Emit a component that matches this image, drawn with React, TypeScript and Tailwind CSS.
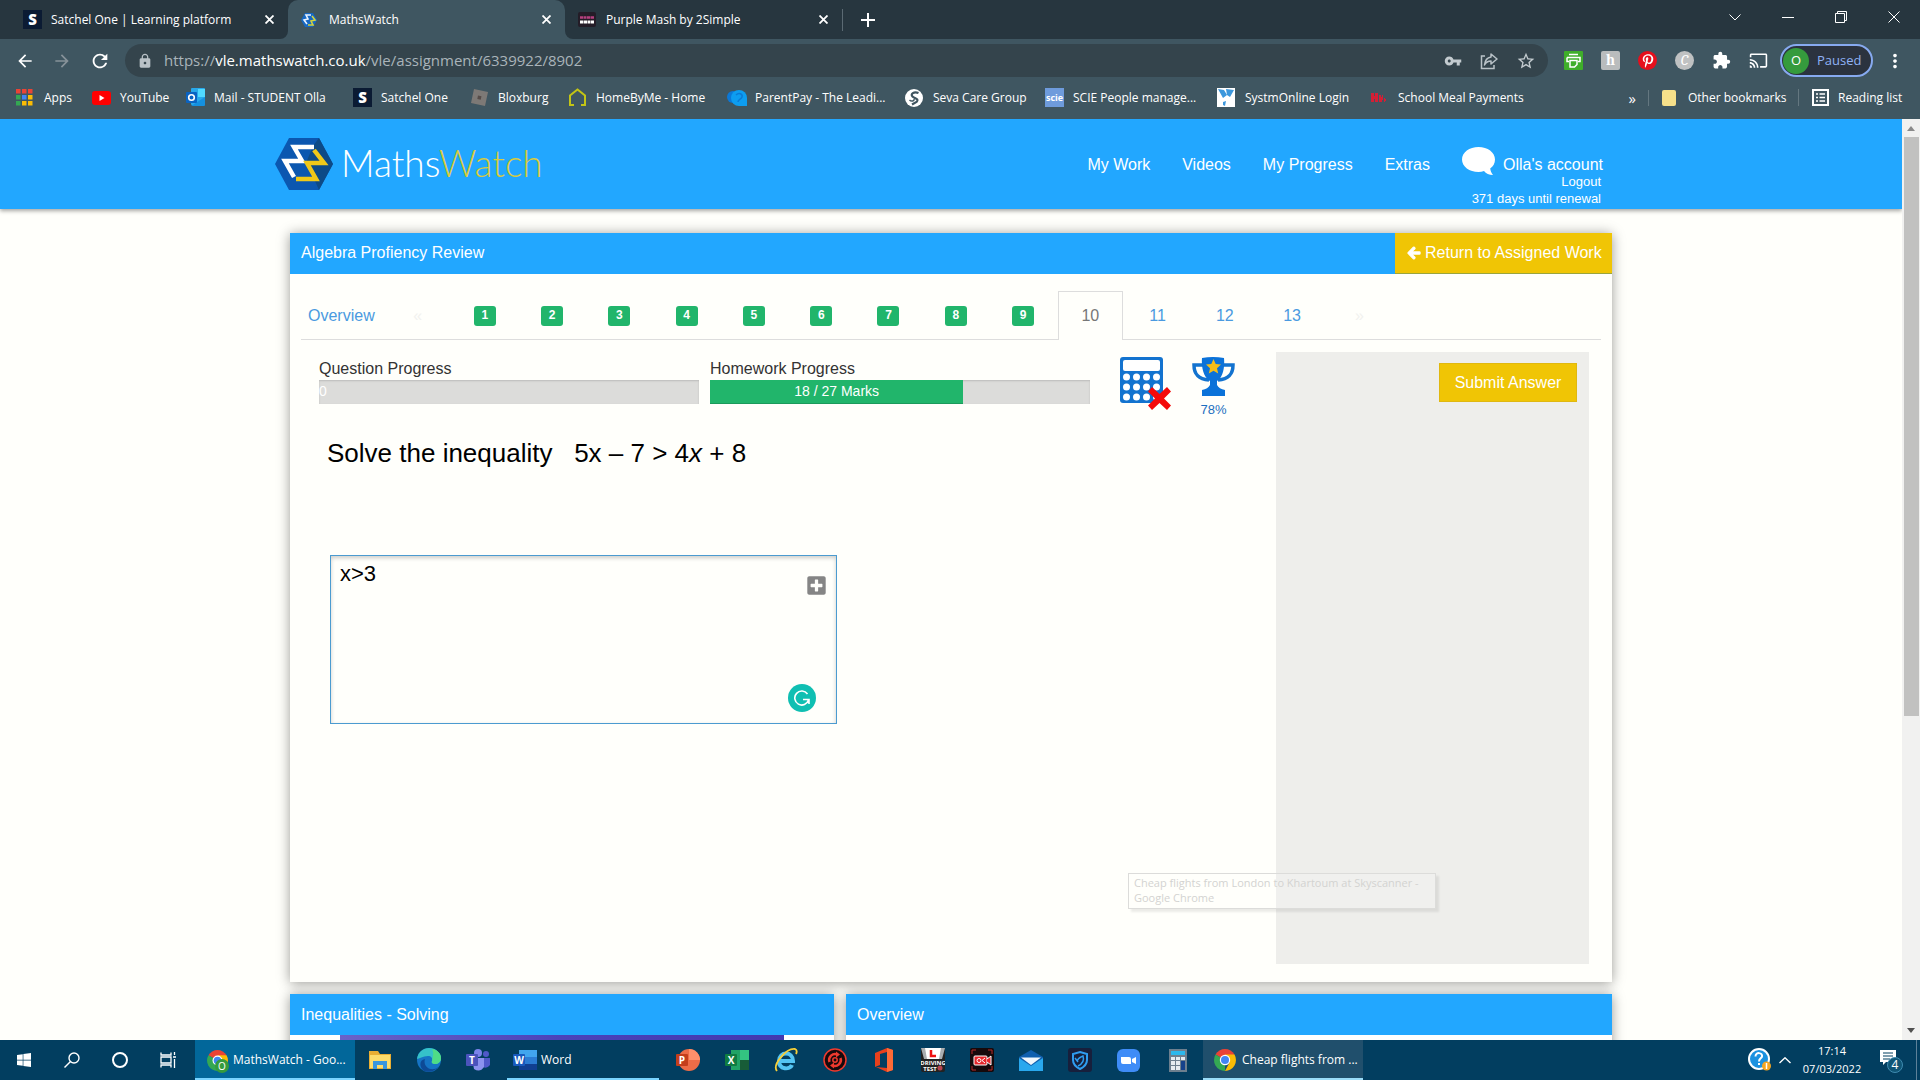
import { useState } from "react";
import type { ReactNode } from "react";
import { FaArrowLeft, FaPinterestP, FaPlusSquare, FaWindows } from "react-icons/fa";
import {
  MdArrowBack,
  MdArrowForward,
  MdCast,
  MdExtension,
  MdLock,
  MdMoreVert,
  MdRefresh,
  MdStarBorder,
  MdVpnKey,
} from "react-icons/md";

type TBrowserTab = {
  title: string;
  icon: ReactNode;
  className: string;
  active?: boolean;
};

type TBookmark = {
  label: string;
  icon: ReactNode;
};

/* ---------- small icons ---------- */

function SatchelIcon() {
  return (
    <span className="flex size-[19px] items-center justify-center bg-[#0b1b33] text-[15px] leading-none font-black text-white">
      S
    </span>
  );
}

function MathsWatchMark({ className }: { className: string }) {
  return (
    <svg viewBox="0 0 58 52" className={className}>
      <path d="M14 0h30l14 26-14 26H14L0 26z" fill="#0b57b0" />
      <path d="M38 8l6-8 14 26-14 26-4-9-9-18z" fill="#0d4a86" />
      <path d="M39 9H19l8 14H10l9 16" fill="none" stroke="#fff" strokeWidth="4.500" />
      <path d="M39 12l10 13H32l9 16H21" fill="none" stroke="#f0c818" strokeWidth="4.500" />
    </svg>
  );
}

function MathsWatchFavicon() {
  return (
    <svg viewBox="0 0 16 16" className="size-4">
      <path d="M4 1h8l4 7-4 7H4L0 8z" fill="#1668c4" />
      <path d="M10 3H5l2 4-4 1 3 4" fill="none" stroke="#e8f2ff" strokeWidth="1.6" />
      <path d="M11 4l3 4-4 1 2 4H7" fill="none" stroke="#d8d43a" strokeWidth="1.6" />
    </svg>
  );
}

function PurpleMashIcon() {
  return (
    <svg viewBox="0 0 18 15" className="h-[15px] w-[18px]">
      <rect width="18" height="15" rx="2" fill="#241c27" />
      <path d="M2 5.500h3m.5 0h3m.5 0h3m.5 0h3.500" stroke="#b5407f" strokeWidth="2.500" />
      <path d="M2 10h3.500m.5 0h3m.5 0h3m.5 0h3" stroke="#fff" strokeWidth="3" />
    </svg>
  );
}

function CloseIcon() {
  return (
    <svg viewBox="0 0 9 9" className="size-[9px]">
      <path d="M.5.5l8 8M8.500.5l-8 8" stroke="#fff" strokeWidth="1.800" />
    </svg>
  );
}

function AppsIcon() {
  const colors = ["#ea4335", "#ea4335", "#ea4335", "#34a853", "#4285f4", "#fbbc05", "#34a853", "#fbbc05", "#fbbc05"];
  return (
    <svg viewBox="0 0 17 17" className="size-[17px]">
      {colors.map((color, i) => (
        <rect key={i} x={(i % 3) * 6} y={Math.floor(i / 3) * 6} width="4.5" height="4.5" fill={color} />
      ))}
    </svg>
  );
}

function YouTubeIcon() {
  return (
    <svg viewBox="0 0 19 14" className="h-[14px] w-[19px]">
      <rect width="19" height="14" rx="3" fill="#f00" />
      <path d="M7.500 4v6l5-3z" fill="#fff" />
    </svg>
  );
}

function OutlookIcon() {
  return (
    <svg viewBox="0 0 19 19" className="size-[19px]">
      <rect x="5" y="0" width="14" height="17" rx="1" fill="#28a8ea" />
      <path d="M12 1h7v8h-7z" fill="#50d9ff" />
      <path d="M5 18l14-9v8a1 1 0 01-1 1z" fill="#1490df" />
      <rect y="4" width="11" height="11" rx="1" fill="#0a63c2" />
      <circle cx="5.500" cy="9.500" r="2.800" fill="none" stroke="#fff" strokeWidth="1.600" />
    </svg>
  );
}

function RobloxIcon() {
  return (
    <svg viewBox="0 0 19 19" className="size-[19px]">
      <path d="M4 1l14 3-3 14-14-3z" fill="#7d7976" />
      <path d="M8 7.500l3.500.8-.8 3.400-3.400-.8z" fill="#564c49" />
    </svg>
  );
}

function HomeByMeIcon() {
  return (
    <svg viewBox="0 0 19 19" className="size-[19px]">
      <path d="M6 17H2V7.500L9.500 1.500 17 7.500V17h-4" fill="none" stroke="#c3c415" strokeWidth="2" />
    </svg>
  );
}

function ParentPayIcon() {
  return (
    <svg viewBox="0 0 20 18" className="h-[18px] w-5">
      <circle cx="6" cy="8" r="6" fill="#0a78d8" />
      <path d="M12 1a8 8 0 018 8v8h-8a8 8 0 010-16z" fill="#0d9df0" />
      <path d="M9 6c3-3 7-1 6 2s-4 2-4 5" fill="none" stroke="#0a7bd6" strokeWidth="1.500" />
    </svg>
  );
}

function SevaIcon() {
  return (
    <svg viewBox="0 0 18 18" className="size-[18px]">
      <circle cx="9" cy="9" r="9" fill="#fff" />
      <path d="M13.500 4C9 2 5 5 7.500 7.500s7 2 4 5.500L7 15.500" fill="none" stroke="#3f5560" strokeWidth="2.200" />
      <path d="M4.500 11c2 2 5 1 4.500-1" fill="none" stroke="#3f5560" strokeWidth="1.500" />
    </svg>
  );
}

function ScieIcon() {
  return (
    <span className="flex size-[19px] items-center justify-center bg-[#6e9bdc] text-[9px] leading-none font-bold text-white">
      scie
    </span>
  );
}

function SystmIcon() {
  return (
    <svg viewBox="0 0 18 19" className="h-[19px] w-[18px]">
      <path fill="#fff" d="M0 0h18v19H0z" />
      <path d="M1 1l6 1 3 5-4 3zM9 1l8 1-4 7-3-2zM6 14l3-1-1 5-2-1z" fill="#3c97dc" />
    </svg>
  );
}

function SchoolIcon() {
  return (
    <svg viewBox="0 0 17 12" className="h-3 w-[17px]" fill="#d21f35">
      <path d="M1 1h3v3h1V1h3v9H5V7H4v3H1zM9 3h2v2h1V3h1v5h-1v2h-3zM14 6h1v1h1v2h-1v1h-1z" />
    </svg>
  );
}

function ReadingListIcon() {
  return (
    <svg viewBox="0 0 17 17" className="size-[17px]" fill="none" stroke="#fff">
      <rect x="1" y="1" width="15" height="15" strokeWidth="2" />
      <path d="M4 5h2M4 8.500h2M4 12h2M7.500 5H13M7.500 8.500H13M7.500 12H13" strokeWidth="1.500" />
    </svg>
  );
}

function ShareIcon() {
  return (
    <svg viewBox="0 0 18 18" className="size-[18px]" fill="none" stroke="#b9c2c7" strokeWidth="1.500">
      <path d="M5 4H1.500v12.500H14V13" />
      <path d="M11 2l6 5-6 5V9c-3 0-5 1-6.500 4C5 8 7.500 5.500 11 5z" strokeLinejoin="round" />
    </svg>
  );
}

function PrintExtensionIcon() {
  return (
    <svg viewBox="0 0 19 19" className="size-[19px]">
      <rect width="19" height="19" rx="1" fill="#3fae2a" />
      <path d="M5 3.500h9M3 6.500h13v4h-2M5 10.500H3v-4M6 9.500h7v4L10.500 16H6z" fill="none" stroke="#fff" strokeWidth="1.500" />
    </svg>
  );
}

function ChromeIcon({ className }: { className: string }) {
  return (
    <svg viewBox="0 0 22 22" className={className}>
      <path d="M11 11L1.500 5.500a11 11 0 0119 0z" fill="#ea4335" />
      <path d="M1.500 5.500L11 11v11A11 11 0 011.500 5.500z" fill="#34a853" />
      <path d="M20.500 5.500A11 11 0 0111 22l4.500-8.500L11 5.500z" fill="#fbbc05" />
      <circle cx="11" cy="11" r="5.200" fill="#fff" />
      <circle cx="11" cy="11" r="4" fill="#4285f4" />
    </svg>
  );
}

function BubbleIcon() {
  return (
    <svg viewBox="0 0 33 28" className="h-7 w-[33px]">
      <path d="M16.500 0C25.600 0 33 5.400 33 12.500c0 4-1.800 7-4.800 9 .3 2.500 1.300 4.500 2.800 6.500-4 0-7-1.500-9-4-1.700.7-3.500 1-5.500 1C7.400 25 0 19.600 0 12.500S7.400 0 16.500 0z" fill="#fff" />
    </svg>
  );
}

function CalculatorIcon() {
  return (
    <svg viewBox="0 0 52 54" className="h-[54px] w-[52px]">
      <rect width="43" height="46" rx="3" fill="#1373cf" />
      <rect x="3" y="3" width="37" height="11" rx="2" fill="#fff" />
      {[20, 30, 40].map((y) =>
        [6.5, 16.5, 26.5, 36.5].map((x) => <circle key={`${x}-${y}`} cx={x} cy={y} r="3.5" fill="#fff" />)
      )}
      <path d="M32 30l7.500 7 7.500-7 4 4.500-7 7 7 7-4 4.500-7.500-7-7.500 7-4-4.500 7-7-7-7z" fill="#f40a0a" />
    </svg>
  );
}

function TrophyIcon() {
  return (
    <svg viewBox="0 0 43 39" className="h-[39px] w-[43px]">
      <path d="M11 8H2c0 9 4 14 15 15M32 8h9c0 9-4 14-15 15" fill="none" stroke="#1373cf" strokeWidth="3.500" />
      <path
        d="M10 1q11-2 22 0c1 12-2 20-7 23v4q2 4 8 5v6H10v-6q6-1 8-5v-4C13 21 9 13 10 1z"
        fill="#0b72d9"
      />
      <path d="M21.500 2l2.200 5 5.300.5-4 3.700 1.200 5.300-4.700-2.800-4.700 2.800L18 11.200 14 7.500l5.300-.5z" fill="#f5be18" />
    </svg>
  );
}

/* ---------- browser window ---------- */

const tabs: TBrowserTab[] = [
  { title: "Satchel One | Learning platform", icon: <SatchelIcon />, className: "w-[288px] pl-[23px]" },
  { title: "MathsWatch", icon: <MathsWatchFavicon />, className: "w-[277px] pl-[13px]", active: true },
  { title: "Purple Mash by 2Simple", icon: <PurpleMashIcon />, className: "w-[277px] pl-[13px]" },
];

const bookmarks: TBookmark[] = [
  { label: "Apps", icon: <AppsIcon /> },
  { label: "YouTube", icon: <YouTubeIcon /> },
  { label: "Mail - STUDENT Olla", icon: <OutlookIcon /> },
  { label: "Satchel One", icon: <SatchelIcon /> },
  { label: "Bloxburg", icon: <RobloxIcon /> },
  { label: "HomeByMe - Home", icon: <HomeByMeIcon /> },
  { label: "ParentPay - The Leadi...", icon: <ParentPayIcon /> },
  { label: "Seva Care Group", icon: <SevaIcon /> },
  { label: "SCIE People manage...", icon: <ScieIcon /> },
  { label: "SystmOnline Login", icon: <SystmIcon /> },
  { label: "School Meal Payments", icon: <SchoolIcon /> },
];

function TabStrip() {
  return (
    <div className="flex h-[39px] items-end bg-[#27363f]">
      {tabs.map((tab) => (
        <div
          key={tab.title}
          className={`relative flex h-full items-center pr-[14px] text-xs text-white ${tab.className} ${
            tab.active ? "rounded-t-[10px] bg-[#3f5661]" : ""
          }`}
        >
          {tab.active && (
            <>
              <svg viewBox="0 0 8 8" className="absolute bottom-0 -left-2 size-2">
                <path d="M8 0v8H0a8 8 0 008-8z" fill="#3f5661" />
              </svg>
              <svg viewBox="0 0 8 8" className="absolute -right-2 bottom-0 size-2">
                <path d="M0 0v8h8a8 8 0 01-8-8z" fill="#3f5661" />
              </svg>
            </>
          )}
          <span className="flex w-7 flex-none">{tab.icon}</span>
          <span className="flex-1 whitespace-nowrap">{tab.title}</span>
          <button type="button" aria-label={`Close ${tab.title}`}>
            <CloseIcon />
          </button>
        </div>
      ))}
      <span className="mb-2 h-[22px] w-px bg-[#5b6a73]" />
      <button type="button" aria-label="New tab" className="flex h-full w-[50px] items-center justify-center">
        <svg viewBox="0 0 14 14" className="size-[14px]">
          <path d="M7 0v14M0 7h14" stroke="#fff" strokeWidth="2" />
        </svg>
      </button>
      <div className="ml-auto flex h-full items-center pb-[5px] text-white">
        <button type="button" aria-label="Search tabs" className="flex w-[53px] justify-center">
          <svg viewBox="0 0 12 7" className="h-[7px] w-3" fill="none" stroke="#fff">
            <path d="M.5.5L6 6 11.500.5" />
          </svg>
        </button>
        <button type="button" aria-label="Minimise" className="flex w-[53px] justify-center">
          <span className="h-px w-3 bg-white" />
        </button>
        <button type="button" aria-label="Restore" className="flex w-[53px] justify-center">
          <svg viewBox="0 0 12 12" className="size-3" fill="none" stroke="#fff">
            <path d="M.5 2.500h9v9h-9zM2.500 2.500v-2h9v9h-2" />
          </svg>
        </button>
        <button type="button" aria-label="Close window" className="flex w-[53px] justify-center">
          <svg viewBox="0 0 12 12" className="size-3" fill="none" stroke="#fff">
            <path d="M.5.5l11 11M11.500.5l-11 11" />
          </svg>
        </button>
      </div>
    </div>
  );
}

function Toolbar() {
  return (
    <div className="flex h-[43px] items-center text-white">
      <div className="flex w-[125px] items-center gap-[17px] pl-[15px]">
        <button type="button" aria-label="Back">
          <MdArrowBack className="size-5" />
        </button>
        <button type="button" aria-label="Forward" className="text-[#879299]">
          <MdArrowForward className="size-5" />
        </button>
        <button type="button" aria-label="Reload">
          <MdRefresh className="size-[22px]" />
        </button>
      </div>
      <div className="flex h-[33px] flex-1 items-center rounded-full bg-[#34444c] pr-3 pl-3">
        <MdLock className="size-4 text-[#b9c2c7]" />
        <p className="flex-1 pl-[11px] text-[15px] text-[#aab4ba]">
          https://<span className="text-white">vle.mathswatch.co.uk</span>/vle/assignment/6339922/8902
        </p>
        <div className="flex items-center gap-[18px] text-[#c3cbcf]">
          <MdVpnKey className="size-[18px]" />
          <ShareIcon />
          <MdStarBorder className="size-5" />
        </div>
      </div>
      <div className="flex items-center gap-[18px] pr-3 pl-4">
        <PrintExtensionIcon />
        <span className="flex size-[19px] items-center justify-center rounded-xs bg-[#b9bcbd] font-serif text-[15px] leading-none font-bold">
          h
        </span>
        <span className="flex size-[19px] items-center justify-center rounded-full bg-[#e60f1c]">
          <FaPinterestP className="size-[14px]" />
        </span>
        <span className="flex size-[19px] items-center justify-center rounded-full bg-[#bfc1c2] font-serif text-[15px] leading-none italic">
          C
        </span>
        <MdExtension className="size-[19px]" />
        <MdCast className="size-[19px]" />
      </div>
      <button
        type="button"
        className="flex h-[33px] w-[93px] items-center gap-2 rounded-full border-2 border-[#87aaf0] bg-[#2b333f] pl-px text-[13px] text-[#8fb2f5]"
      >
        <span className="flex size-[26px] items-center justify-center rounded-full bg-[#359b3d] text-white">O</span>
        Paused
      </button>
      <button type="button" aria-label="Menu" className="flex w-[47px] justify-center pr-1">
        <MdMoreVert className="size-[22px]" />
      </button>
    </div>
  );
}

function BookmarksBar() {
  return (
    <div className="flex h-[37px] items-center pb-1.5 text-xs whitespace-nowrap text-white">
      <ul className="grid flex-1 grid-cols-[76px_94px_167px_117px_98px_159px_178px_140px_172px_153px_170px] items-center pl-4">
        {bookmarks.map((bookmark) => (
          <li key={bookmark.label}>
            <a href="#" className="flex items-center">
              <span className="flex w-[28px] flex-none">{bookmark.icon}</span>
              {bookmark.label}
            </a>
          </li>
        ))}
      </ul>
      <button type="button" className="mr-3 text-[15px]">
        »
      </button>
      <a href="#" className="flex w-[150px] items-center gap-3 border-l border-[#647780] pl-[13px]">
        <span className="h-4 w-[14px] rounded-xs bg-[#f6e08a]" />
        Other bookmarks
      </a>
      <a href="#" className="flex w-[122px] items-center gap-[9px] border-l border-[#647780] pl-[13px]">
        <ReadingListIcon />
        Reading list
      </a>
    </div>
  );
}

/* ---------- site ---------- */

function SiteHeader() {
  return (
    <header className="relative h-[90px] bg-[#22a7ff] text-white shadow-[0_2px_4px_rgba(0,0,0,0.35)]">
      <div className="mx-auto flex max-w-[1352px] justify-between pr-6">
        <a href="#" className="flex gap-2 pt-[19px]">
          <MathsWatchMark className="h-[52px] w-[58px]" />
          <span className="font-['Lato'] text-[37px] leading-[50px] font-light">
            Maths<span className="text-[#d9cb3c]">Watch</span>
          </span>
        </a>
        <nav className="flex gap-8 text-base">
          <a href="#" className="pt-[34px]">My Work</a>
          <a href="#" className="pt-[34px]">Videos</a>
          <a href="#" className="pt-[34px]">My Progress</a>
          <a href="#" className="pt-[34px]">Extras</a>
          <div className="pt-7 text-right text-[13px] leading-[17px]">
            <a href="#" className="flex h-7 items-start gap-2 text-base leading-9">
              <BubbleIcon />
              Olla's account
            </a>
            <a href="#" className="-mt-0.5 block pr-0.5">Logout</a>
            <p className="pr-0.5">371 days until renewal</p>
          </div>
        </nav>
      </div>
    </header>
  );
}

function QuestionTabs() {
  const done = [1, 2, 3, 4, 5, 6, 7, 8, 9];
  const remaining = [11, 12, 13];

  return (
    <div className="flex h-[49px] border-b border-[#ddd] text-base text-[#4a9ae0]">
      <a href="#" className="w-[83px] pt-[13px] pl-[7px]">Overview</a>
      <div className="flex w-[1009px] text-center">
        <span className="flex-1 pt-[13px] text-[#f2f2ef]">«</span>
        {done.map((n) => (
          <a key={n} href="#" className="flex flex-1 items-start justify-center pt-[15px]">
            <span className="h-5 w-[22px] rounded-[3px] bg-[#21b56b] text-xs leading-[18px] font-bold text-white">
              {n}
            </span>
          </a>
        ))}
        <div className="-mb-px flex flex-1 justify-center">
          <a href="#" className="w-[65px] border border-b-0 border-[#ddd] bg-[#fffffb] pt-3 text-[#777]">
            10
          </a>
        </div>
        {remaining.map((n) => (
          <a key={n} href="#" className="flex-1 pt-[13px]">
            {n}
          </a>
        ))}
        <span className="flex-1 pt-[13px] text-[#f2f2ef]">»</span>
      </div>
    </div>
  );
}

function ProgressBar({ label, value, total, text }: { label: string; value: number; total: number; text: string }) {
  return (
    <div className="w-[380px]">
      <p className="pt-px leading-[23px] text-[#333]">{label}</p>
      <div className="h-6 bg-[#dcdcda] text-center text-sm leading-[23px] text-white shadow-[inset_0_1px_2px_rgba(0,0,0,0.15)]">
        <div
          className="h-full bg-[#21b56b] shadow-[inset_0_-1px_0_rgba(0,0,0,0.15)]"
          style={{ width: `${(value / total) * 100}%` }}
        >
          {text}
        </div>
      </div>
    </div>
  );
}

function QuestionPanel() {
  const [answer, setAnswer] = useState("x>3");

  return (
    <section className="bg-[#fffffb] shadow-[0_1px_12px_rgba(0,0,0,0.4)]">
      <div className="flex h-[41px] bg-[#22a7ff] text-white">
        <h1 className="flex-1 pt-2 pl-[11px]">Algebra Profiency Review</h1>
        <button type="button" className="flex w-[217px] items-center border-b border-[#9aa53c] bg-[#f0c505] pl-3">
          <FaArrowLeft className="mr-1 size-[14px]" stroke="#fff" strokeWidth="40" />
          Return to Assigned Work
        </button>
      </div>
      <div className="px-[11px] pt-[17px] pb-[18px]">
        <QuestionTabs />
        <div className="flex min-h-[612px] items-stretch pt-3">
          <div className="flex-1 pl-[18px]">
            <div className="flex pt-1">
              <ProgressBar label="Question Progress" value={0} total={3} text="0" />
              <div className="w-[11px]" />
              <ProgressBar label="Homework Progress" value={18} total={27} text="18 / 27 Marks" />
              <button type="button" aria-label="No calculator" className="ml-[30px] h-[54px] pt-px">
                <CalculatorIcon />
              </button>
              <div className="ml-5 w-[43px] pt-px text-center text-[13px] leading-[27px] text-[#1d6fc0]">
                <TrophyIcon />
                78%
              </div>
            </div>
            <div className="pl-2">
              <p className="mt-[14px] text-[26px] leading-8 whitespace-pre text-black">
                Solve the inequality{"   "}5x – 7 &gt; 4<i>x</i> + 8
              </p>
              <div className="relative mt-[86px] ml-[3px] h-[169px] w-[507px]">
                <textarea
                  aria-label="Answer"
                  value={answer}
                  onChange={(e) => setAnswer(e.target.value)}
                  className="block size-full resize-none border border-[#4b9bd0] px-[9px] py-[3px] text-[22px] leading-[30px] text-black shadow-[inset_0_2px_4px_rgba(0,0,0,0.2)] outline-none"
                />
                <button type="button" aria-label="Insert" className="absolute top-5 right-[10px] text-[#858585]">
                  <FaPlusSquare className="size-[21px]" />
                </button>
                <span className="absolute right-[21px] bottom-3 flex size-7 items-center justify-center rounded-full bg-[#10bfb2]">
                  <svg viewBox="0 0 16 16" className="size-4" fill="none" stroke="#fff" strokeWidth="1.600">
                    <path d="M13.500 4A7 7 0 1014.500 10M9 9.500h6V14" />
                  </svg>
                </span>
              </div>
            </div>
          </div>
          <aside className="mr-3 h-[612px] w-[313px] flex-none bg-[#eeeeeb] pt-[11px] pr-3 text-right">
            <button
              type="button"
              className="h-[39px] w-[138px] border border-[#e0b810] bg-[#f0c505] text-center text-white"
            >
              Submit Answer
            </button>
          </aside>
        </div>
      </div>
    </section>
  );
}

function LowerPanels() {
  return (
    <div className="mt-3 grid grid-cols-[544fr_766fr] gap-3">
      <section className="bg-white shadow-[0_1px_12px_rgba(0,0,0,0.4)]">
        <h2 className="h-[41px] bg-[#22a7ff] pt-[9px] pl-[11px] text-white">Inequalities - Solving</h2>
        <div className="mx-[50px] h-60 bg-linear-to-r from-[#6a63c8] via-[#4a42ba] to-[#4238b0]" />
      </section>
      <section className="bg-white shadow-[0_1px_12px_rgba(0,0,0,0.4)]">
        <h2 className="h-[41px] bg-[#22a7ff] pt-[9px] pl-[11px] text-white">Overview</h2>
      </section>
    </div>
  );
}

function Scrollbar() {
  return (
    <div className="flex w-[18px] flex-none flex-col items-center justify-between bg-[#f1f1f0] py-[7px]">
      <svg viewBox="0 0 8 5" className="h-[5px] w-2">
        <path d="M0 5l4-5 4 5z" fill="#8a8a8a" />
      </svg>
      <div className="mt-[6px] mb-auto h-[579px] w-[15px] bg-[#c1c1c0]" />
      <svg viewBox="0 0 8 5" className="h-[5px] w-2">
        <path d="M0 0l4 5 4-5z" fill="#505050" />
      </svg>
    </div>
  );
}

/* ---------- taskbar ---------- */

function OfficeTile({ letter, back, front }: { letter: string; back: ReactNode; front: string }) {
  return (
    <svg viewBox="0 0 24 22" className="h-[22px] w-6">
      {back}
      <rect y="5" width="12" height="12" rx="1" fill={front} />
      <text x="6" y="15" textAnchor="middle" fontSize="10" fontWeight="700" fill="#fff">
        {letter}
      </text>
    </svg>
  );
}

const wordIcon = (
  <OfficeTile
    letter="W"
    front="#185abd"
    back={
      <>
        <path d="M6 1h18v7H6z" fill="#41a5ee" />
        <path d="M6 8h18v7H6z" fill="#2b7cd3" />
        <path d="M6 15h18v6H6z" fill="#103f91" />
      </>
    }
  />
);

const pinned: { name: string; icon: ReactNode }[] = [
  {
    name: "File Explorer",
    icon: (
      <svg viewBox="0 0 22 18" className="h-[18px] w-[22px]">
        <path d="M0 0h9l2 3h11v15H0z" fill="#e9ae33" />
        <path d="M1 4h20v13H1z" fill="#fddc6b" />
        <path d="M4 18v-8h14v8h-4v-4H8v4z" fill="#3a96dd" />
      </svg>
    ),
  },
  {
    name: "Edge",
    icon: (
      <svg viewBox="0 0 24 24" className="size-6">
        <circle cx="12" cy="12" r="12" fill="#1574c4" />
        <path d="M0 11C1 4 6 0 12 0c7 0 12 5 12 10 0 4-3 6-6 6-2 0-4-1-3-3 1-3-1-5-4-5-5 0-9 3-11 3z" fill="#35c1c9" />
        <path d="M15 1c6 1 9 5 9 9 0 4-3 6-6 6-2 0-4-1-3-3 1-5 2-8 0-12z" fill="#4fdc86" />
        <path d="M8 11c-2 6 3 11 9 10 2 0 4-2 5-3-3 5-10 7-15 5-5-4-5-11 1-12z" fill="#0d4a96" />
      </svg>
    ),
  },
  {
    name: "Teams",
    icon: (
      <OfficeTile
        letter="T"
        front="#4b53bc"
        back={
          <>
            <circle cx="12" cy="4" r="4" fill="#7b83eb" />
            <circle cx="20" cy="5" r="3" fill="#5059c9" />
            <path d="M16 9h8v7q-3 4-7 2z" fill="#5059c9" />
            <path d="M6 9h12v9q-4 6-10 2z" fill="#8c92ee" />
          </>
        }
      />
    ),
  },
];

const apps: { name: string; icon: ReactNode }[] = [
  {
    name: "PowerPoint",
    icon: (
      <OfficeTile
        letter="P"
        front="#c43e1c"
        back={
          <>
            <circle cx="13" cy="11" r="11" fill="#ed6c47" />
            <path d="M13 0a11 11 0 0111 11H13z" fill="#ff8f6b" />
          </>
        }
      />
    ),
  },
  {
    name: "Excel",
    icon: (
      <OfficeTile
        letter="X"
        front="#107c41"
        back={
          <>
            <path d="M6 1h9v20H6z" fill="#21a366" />
            <path d="M15 1h9v10h-9z" fill="#33c481" />
            <path d="M15 11h9v10h-9z" fill="#185c37" />
          </>
        }
      />
    ),
  },
  {
    name: "Internet Explorer",
    icon: (
      <svg viewBox="0 0 24 24" className="size-6" fill="none">
        <path d="M5 13h14c0-10-14-10-14 0 0 9 11 9 13 4" stroke="#54c4f2" strokeWidth="4" />
        <path d="M3 23C-2 17 12 0 21 1c2 1 2 3 1 5" stroke="#f6cf38" strokeWidth="1.800" />
      </svg>
    ),
  },
  {
    name: "Recorder",
    icon: (
      <svg viewBox="0 0 24 24" className="size-6" fill="none" stroke="#ef3a2e">
        <circle cx="12" cy="12" r="11" fill="#170a0d" strokeWidth="1.500" />
        <path d="M6.500 14a6 6 0 018-7.500M17.500 10a6 6 0 01-8 7.500" strokeWidth="2.500" />
        <path d="M13 3.500l4 3-4 3zM11 20.500l-4-3 4-3z" fill="#ef3a2e" stroke="none" />
        <circle cx="12" cy="12" r="2.200" strokeWidth="1.500" />
      </svg>
    ),
  },
  {
    name: "Office",
    icon: (
      <svg viewBox="0 0 20 24" className="h-6 w-5">
        <path d="M13 0l6 2v20l-6 2-11-5 11 1V4L6 6v11l-5 2V5z" fill="#e8401c" />
        <path d="M13 0l6 2v20l-6 2z" fill="#ff6a36" />
      </svg>
    ),
  },
  {
    name: "Driving Test",
    icon: (
      <svg viewBox="0 0 24 24" className="size-6">
        <rect width="24" height="24" rx="2" fill="#222" />
        <path d="M0 0h24l-3 11H3z" fill="#a9adb0" />
        <path d="M4 0h16l-2 11H6z" fill="#fff" />
        <path d="M10 2v6h5" stroke="#e11" strokeWidth="2.500" fill="none" />
        <text x="12" y="17" textAnchor="middle" fontSize="6" fontWeight="700" fill="#fff">DRIVING</text>
        <text x="9" y="23" textAnchor="middle" fontSize="6" fontWeight="700" fill="#fff">TEST</text>
        <circle cx="19" cy="20" r="2.500" fill="#b4434f" />
      </svg>
    ),
  },
  {
    name: "Screen Recorder",
    icon: (
      <svg viewBox="0 0 24 24" className="size-6" fill="none">
        <rect width="24" height="24" rx="2" fill="#15090b" />
        <path d="M2 6V2h4M18 2h4v4M22 18v4h-4M6 22H2v-4" stroke="#b52a2a" />
        <rect x="4" y="8" width="13" height="9" rx="1" fill="#e5262b" stroke="#fff" />
        <path d="M17 11l4-3v9l-4-3" fill="#e5262b" stroke="#fff" />
        <circle cx="9" cy="12.500" r="2" stroke="#fff" />
        <path d="M15 10l-3 2.500 3 2.500" stroke="#fff" />
      </svg>
    ),
  },
  {
    name: "Mail",
    icon: (
      <svg viewBox="0 0 24 23" className="h-[23px] w-6">
        <path d="M0 8l12-7 12 7v14H0z" fill="#0f5fae" />
        <path d="M0 9l12 8L24 9v13H0z" fill="#29a8ee" />
        <path d="M2 8.500h20L12 16z" fill="#f0f7fc" />
      </svg>
    ),
  },
  {
    name: "Security",
    icon: (
      <svg viewBox="0 0 24 24" className="size-6" fill="none">
        <rect width="24" height="24" rx="3" fill="#171f3c" />
        <path d="M12 4l7 2v6c0 4-3 7-7 9-4-2-7-5-7-9V6z" stroke="#2f9cf0" strokeWidth="2" />
        <path d="M10 18c6-3 6-7 5-10-2 1-5 2-6 5M7 10l3 4" stroke="#2f9cf0" strokeWidth="1.500" />
      </svg>
    ),
  },
  {
    name: "Zoom",
    icon: (
      <svg viewBox="0 0 23 23" className="size-[23px]">
        <rect width="23" height="23" rx="6" fill="#3f8cf7" />
        <path d="M4 8h8q2 0 2 2v5H6q-2 0-2-2zM15 10l4-2v7l-4-2z" fill="#fff" />
      </svg>
    ),
  },
  {
    name: "Calculator",
    icon: (
      <svg viewBox="0 0 18 23" className="h-[23px] w-[18px]">
        <path d="M0 0h18v23H0z" fill="#6d7f8e" />
        <path d="M2 2h14v4H2z" fill="#2cb8ec" />
        <path d="M2 8h4v3H2zM7 8h4v3H7zM12 8h4v3h-4zM2 12h4v4H2zM7 12h4v4H7zM2 17h4v4H2zM7 17h4v4H7z" fill="#e6ecf0" />
        <path d="M12 12h4v9h-4z" fill="#15418a" />
      </svg>
    ),
  },
];

function TaskButton({ name, icon }: { name: string; icon: ReactNode }) {
  return (
    <button type="button" aria-label={name} className="flex h-full w-[49px] items-center justify-center">
      {icon}
    </button>
  );
}

function Taskbar() {
  return (
    <footer className="flex h-10 flex-none items-stretch bg-[#023e60] text-xs whitespace-nowrap text-white">
      <button type="button" aria-label="Start" className="flex w-12 items-center justify-center">
        <FaWindows className="size-4" />
      </button>
      <button type="button" aria-label="Search" className="flex w-12 items-center justify-center">
        <svg viewBox="0 0 16 16" className="size-4" fill="none" stroke="#fff" strokeWidth="1.400">
          <circle cx="10" cy="6" r="5" />
          <path d="M6.500 9.500L.5 15.500" />
        </svg>
      </button>
      <button type="button" aria-label="Cortana" className="flex w-12 items-center justify-center">
        <span className="size-4 rounded-full border-2 border-white" />
      </button>
      <button type="button" aria-label="Task view" className="mr-[3px] flex w-12 items-center justify-center">
        <svg viewBox="0 0 16 16" className="size-4" fill="none" stroke="#fff" strokeWidth="1.300">
          <path d="M1 .5V3h10V.5M1 15.500V13h10v2.500M1 5h10v6H1zM14.500 0v3M14.500 7v9M13 5h3" />
        </svg>
      </button>
      <button type="button" className="flex w-40 items-center border-b-2 border-[#79d4ff] bg-[#02679a] pt-0.5 pl-3">
        <span className="relative mr-[5px] flex">
          <ChromeIcon className="size-[21px]" />
          <span className="absolute top-[9px] left-2 flex size-[14px] items-center justify-center rounded-full bg-[#359b3d] text-[10px] leading-none">
            O
          </span>
        </span>
        MathsWatch - Goo...
      </button>
      {pinned.map((app) => (
        <TaskButton key={app.name} {...app} />
      ))}
      <button
        type="button"
        className="mx-[5px] flex w-[152px] items-center gap-1 border-b-2 border-[#79d4ff] pt-0.5 pl-1.5"
      >
        {wordIcon}
        Word
      </button>
      <div className="-ml-px flex">
        {apps.map((app) => (
          <TaskButton key={app.name} {...app} />
        ))}
      </div>
      <button
        type="button"
        className="ml-px flex w-40 items-center gap-1.5 border-b-2 border-[#9adcf8] bg-[#204f6c] pt-0.5 pl-[11px]"
      >
        <ChromeIcon className="size-[22px]" />
        Cheap flights from ...
      </button>
      <div className="ml-auto flex items-center">
        <svg viewBox="0 0 24 24" className="size-6">
          <circle cx="12" cy="11" r="10" fill="#1c92e0" stroke="#fff" strokeWidth="2" />
          <path d="M8.500 8.500c0-5 7.500-4 6.500 0-.5 2-3 2-3 5M12 15v2" fill="none" stroke="#fff" strokeWidth="2" />
          <circle cx="19.500" cy="18" r="4.500" fill="#f5a623" />
          <path d="M19.500 15v6" stroke="#fff" strokeWidth="1.500" />
        </svg>
        <svg viewBox="0 0 12 7" className="ml-2 h-[7px] w-3" fill="none" stroke="#fff" strokeWidth="1.400">
          <path d="M.5 6L6 .8 11.500 6" />
        </svg>
        <div className="ml-2.5 w-[62px] text-center text-[11px] leading-[18px]">
          <p>17:14</p>
          <p>07/03/2022</p>
        </div>
        <button type="button" aria-label="Notifications" className="relative mr-3 ml-[17px] h-6 w-6">
          <svg viewBox="0 0 24 24" className="size-6">
            <path d="M0 2h16v12H6l-3 3v-3H0z" fill="#fff" />
            <path d="M3 5h10M3 8h10M3 11h7" stroke="#023e60" strokeWidth="1.200" />
          </svg>
          <span className="absolute top-[9px] left-[7px] flex size-4 items-center justify-center rounded-full border border-[#3f8bb0] bg-[#0f5576] text-xs leading-none">
            4
          </span>
        </button>
        <span className="mr-[3px] h-10 w-px bg-[#5d8199]" />
      </div>
    </footer>
  );
}

export default function App() {
  return (
    <div className="flex h-screen flex-col overflow-hidden font-['Open_Sans','Noto_Sans',sans-serif]">
      <div className="flex-none bg-[#3f5661]">
        <TabStrip />
        <Toolbar />
        <BookmarksBar />
      </div>
      <div className="flex min-h-0 flex-1">
        <div className="flex-1 overflow-hidden bg-[#fffffb] font-['Liberation_Sans',Arial,sans-serif]">
          <SiteHeader />
          <main className="mx-auto mt-6 max-w-[1322px]">
            <QuestionPanel />
            <LowerPanels />
          </main>
        </div>
        <Scrollbar />
      </div>
      <Taskbar />
      <div
        role="tooltip"
        className="absolute top-[873px] left-[1128px] w-[308px] border border-[#dcdcda] bg-white/15 px-[5px] pt-px pb-[3px] text-[11px] leading-[15px] text-[#d3d3d1] shadow-[3px_3px_2px_rgba(0,0,0,0.08)]"
      >
        Cheap flights from London to Khartoum at Skyscanner - Google Chrome
      </div>
    </div>
  );
}
